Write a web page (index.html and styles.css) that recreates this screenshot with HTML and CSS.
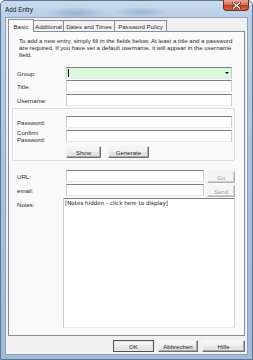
FILE: index.html
```html
<!DOCTYPE html>
<html>
<head>
<meta charset="utf-8">
<link rel="stylesheet" href="styles.css">
</head>
<body>
<div class="window">
  <div class="titlebar">
    <span class="title">Add Entry</span>
    <div class="close"><svg width="9" height="7" viewBox="0 0 9 7"><path d="M1.5 1 L7.5 6 M7.5 1 L1.5 6" stroke="#4a1a10" stroke-width="2.6" stroke-linecap="square"/><path d="M1.5 1 L7.5 6 M7.5 1 L1.5 6" stroke="#fff" stroke-width="1.4" stroke-linecap="square"/></svg></div>
  </div>
  <div class="client">
    <div class="tabs">
      <div class="tab active t1">Basic</div>
      <div class="tab t2">Additional</div>
      <div class="tab t3">Dates and Times</div>
      <div class="tab t4">Password Policy</div>
    </div>
    <div class="panel">
      <p class="info">To add a new entry, simply fill in the fields below. At least a title and a password<br>are required. If you have set a default username, it will appear in the username<br>field.</p>

      <div class="row first">
        <span class="label">Group:</span>
        <div class="field combo"><span class="caret"></span><span class="arrow"></span></div>
      </div>
      <div class="row r1">
        <span class="label">Title:</span>
        <div class="field"></div>
      </div>
      <div class="row r2">
        <span class="label">Username:</span>
        <div class="field"></div>
      </div>

      <div class="groupbox">
        <div class="row gfirst">
          <span class="label">Password:</span>
          <div class="field"></div>
        </div>
        <div class="row r2">
          <span class="label two">Confirm<br>Password:</span>
          <div class="field"></div>
        </div>
        <div class="btnrow">
          <div class="btn show">Show</div>
          <div class="btn gen">Generate</div>
        </div>
      </div>

      <div class="row url">
        <span class="label">URL:</span>
        <div class="field short"></div>
        <div class="btn disabled small">Go</div>
      </div>
      <div class="row r2">
        <span class="label">email:</span>
        <div class="field short"></div>
        <div class="btn disabled small">Send</div>
      </div>
      <div class="notesrow">
        <span class="label notes-label">Notes:</span>
        <div class="notes">[Notes hidden - click here to display]</div>
      </div>
    </div>
    <div class="footer">
      <div class="btn fbtn ok">OK</div>
      <div class="btn fbtn cancel">Abbrechen</div>
      <div class="btn fbtn help">Hilfe</div>
    </div>
  </div>
</div>
</body>
</html>
```

FILE: styles.css
```css
* { box-sizing: border-box; }
html, body { margin: 0; padding: 0; }
body {
  width: 253px;
  height: 360px;
  overflow: hidden;
  font-family: "Liberation Sans", Arial, sans-serif;
  font-size: 6.1px;
  color: #2a2a2a;
}
.window {
  width: 253px;
  height: 360px;
  display: flex;
  flex-direction: column;
  background:
    radial-gradient(ellipse 30px 6px at 75px 12px, rgba(120,150,185,0.55), rgba(120,150,185,0)),
    radial-gradient(ellipse 28px 5px at 140px 11px, rgba(120,150,185,0.5), rgba(120,150,185,0)),
    linear-gradient(to bottom, #c9dbee 0px, #b8cfe8 17px, #a7c2df 200px, #9fbbd8 360px);
  border: 1px solid #5b7693;
  border-radius: 5px 5px 0 0;
}
.titlebar {
  height: 16px;
  display: flex;
  align-items: flex-start;
  justify-content: space-between;
  flex: none;
}
.title {
  font-size: 6.4px;
  margin: 5px 0 0 4px;
  color: #1a1a1a;
}
.close {
  width: 26px;
  height: 11px;
  margin: -1px 3px 0 0;
  border: 1px solid #6b2e22;
  border-top: none;
  border-radius: 0 0 4px 4px;
  background: linear-gradient(to bottom, #e7a795 0%, #d9735c 45%, #c3401f 55%, #d46a3c 100%);
  display: flex;
  align-items: center;
  justify-content: center;
}
.client {
  flex: 1;
  margin: 0 4px 4px 4px;
  background: #f0f0f0;
  border: 1px solid #8ba2bb;
  display: flex;
  flex-direction: column;
}
.tabs {
  display: flex;
  margin: 1px 0 0 2px;
  height: 13px;
  position: relative;
  z-index: 1;
}
.tab {
  height: 12px;
  margin-top: 1px;
  display: flex;
  align-items: center;
  justify-content: center;
  border: 1px solid #898c95;
  border-left: none;
  background: #f2f2f2;
  white-space: nowrap;
}
.tab.active {
  height: 13px;
  margin-top: 0;
  border-left: 1px solid #898c95;
  border-bottom: none;
  background: #f9f9f9;
}
.t1 { width: 26px; }
.t2 { width: 30px; }
.t3 { width: 51px; }
.t4 { width: 52px; }
.panel {
  height: 305px;
  margin: -1px 2px 0 2px;
  border: 1px solid #898c95;
  background: #f9f9f9;
  padding: 5px 0 0 8px;
  display: flex;
  flex-direction: column;
  flex: none;
}
.info {
  margin: 0 0 0 2px;
  line-height: 7px;
  white-space: nowrap;
}
.row {
  display: flex;
  align-items: center;
  height: 12px;
  flex: none;
}
.row.first { margin-top: 9px; }
.row.r1 { margin-top: 1px; }
.row.r2 { margin-top: 2px; }
.label {
  width: 49px;
  flex: none;
  white-space: nowrap;
}
.label.two { line-height: 7px; }
.field {
  width: 166px;
  height: 12px;
  background: #fff;
  border: 1px solid;
  border-color: #7d7f83 #c9ccd2 #e3e9ef #c9ccd2;
  position: relative;
}
.field.combo {
  background: #dcf9dc;
  display: flex;
  align-items: center;
  justify-content: space-between;
}
.caret {
  width: 1px;
  height: 8px;
  background: #000;
  margin-left: 1px;
}
.arrow {
  width: 0;
  height: 0;
  border-left: 2px solid transparent;
  border-right: 2px solid transparent;
  border-top: 2px solid #000;
  margin-right: 2px;
}
.groupbox {
  margin: 2px 0 0 -5px;
  width: 223px;
  height: 53px;
  border: 1px solid #d5dfe5;
  border-radius: 2px;
  padding: 7px 0 0 4px;
  display: flex;
  flex-direction: column;
  box-shadow: inset 1px 1px 0 #fff;
}
.btnrow {
  display: flex;
  margin: 4px 0 0 49px;
  gap: 7px;
}
.btn {
  height: 12px;
  display: flex;
  align-items: center;
  justify-content: center;
  background: linear-gradient(to bottom, #f6f6f6, #efefef 50%, #e6e6e6 51%, #e0e0e0);
  border: 1px solid;
  border-color: #f4f4f4 #707070 #707070 #f4f4f4;
  box-shadow: inset -1px -1px 0 #a8a8a8;
  white-space: nowrap;
}
.btn.show { width: 35px; }
.btn.gen { width: 41px; }
.row.url { margin-top: 9px; }
.field.short { width: 138px; }
.btn.small {
  width: 28px;
  height: 12px;
  margin-left: 3px;
  margin-top: 2px;
}
.btn.disabled {
  color: #a0a0a0;
  background: #f4f4f4;
  border-color: #f4f4f4 #adb2b5 #adb2b5 #f4f4f4;
  box-shadow: inset -1px -1px 0 #d0d0d0;
}
.notesrow {
  display: flex;
  margin-top: 2px;
  align-items: flex-start;
}
.notes-label {
  width: 46px;
  padding-top: 3px;
}
.notes {
  width: 172px;
  height: 130px;
  background: #fff;
  border: 1px solid;
  border-color: #7d7f83 #c9ccd2 #e3e9ef #c9ccd2;
  font-family: "DejaVu Sans", Verdana, sans-serif;
  font-size: 5.6px;
  line-height: 8px;
  padding: 0 0 0 1px;
  color: #111;
  white-space: nowrap;
}
.footer {
  display: flex;
  justify-content: flex-end;
  padding: 4px 2px 0 0;
}
.btn.fbtn { height: 12px; }
.btn.ok {
  width: 41px;
  border-color: #505050;
  box-shadow: inset 0 0 0 1px #e8e8e8;
}
.btn.cancel { width: 40px; margin-left: 4px; }
.btn.help { width: 43px; margin-left: 4px; }
```
